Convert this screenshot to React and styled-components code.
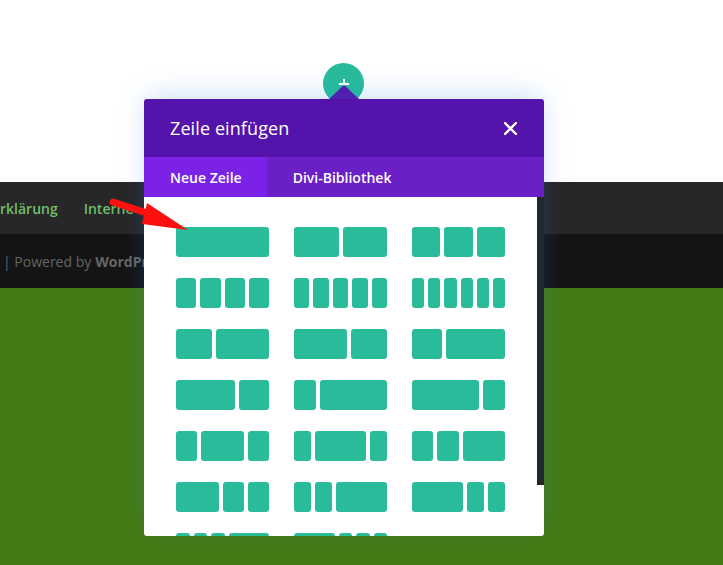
import React from 'react'
import styled, { createGlobalStyle } from 'styled-components'

const GlobalStyle = createGlobalStyle`
	html, body {
		margin: 0;
		padding: 0;
		background: #fff;
		font-family: "Open Sans", "Noto Sans", sans-serif;
		overflow: hidden;
	}
`

const Page = styled.div`
	position: relative;
	width: 723px;
	height: 565px;
	display: flex;
	flex-direction: column;
	overflow: hidden;
`

const TopArea = styled.div`
	height: 182px;
	background: #fff;
`

const NavBar = styled.div`
	height: 52px;
	background: #272727;
	display: flex;
	align-items: center;
	gap: 26px;
	font-size: 14px;
	font-weight: 600;
	color: #6fbf6b;
`

const FooterBar = styled.div`
	height: 54px;
	background: #141414;
	display: flex;
	align-items: center;
	padding-left: 3px;
	font-size: 14px;
	color: #666;

	b {
		font-weight: 700;
		margin-left: 4px;
	}
`

const GreenArea = styled.div`
	flex: 1;
	background: #447a13;
`

const AddButton = styled.div`
	position: absolute;
	left: 323px;
	top: 63px;
	width: 41px;
	height: 41px;
	border-radius: 50%;
	background: #29bb9a;
	display: flex;
	justify-content: center;
	padding-top: 16px;
	box-sizing: border-box;
	color: #fff;
`

const Pointer = styled.div`
	position: absolute;
	left: 329px;
	top: 85px;
	width: 0;
	height: 0;
	border-left: 15px solid transparent;
	border-right: 15px solid transparent;
	border-bottom: 14px solid #5413ab;
`

const Modal = styled.div`
	position: absolute;
	left: 144px;
	top: 99px;
	width: 400px;
	height: 437px;
	display: flex;
	flex-direction: column;
	border-radius: 3px;
	overflow: hidden;
	background: #fff;
	box-shadow: 0 -6px 26px -4px rgba(43, 135, 218, 0.28);
`

const Header = styled.div`
	height: 58px;
	flex: none;
	background: #5413ab;
	display: flex;
	align-items: center;
	justify-content: space-between;
	padding: 0 27px 0 26px;
	color: #fff;
`

const Title = styled.h1`
	margin: 0;
	font-size: 18px;
	font-weight: 500;
	letter-spacing: 0.1px;
`

const Tabs = styled.div`
	height: 40px;
	flex: none;
	display: flex;
	background: #6a1fc7;
`

const Tab = styled.div`
	display: flex;
	align-items: center;
	padding: 0 25px 0 26px;
	font-size: 14px;
	font-weight: 600;
	color: #fff;
	background: ${(props) => (props.active ? '#7b22e6' : 'transparent')};
`

const Content = styled.div`
	position: relative;
	flex: 1;
	overflow: hidden;
	padding: 30px 0 0 32px;
`

const ScrollTrack = styled.div`
	position: absolute;
	right: 0;
	top: 0;
	width: 7px;
	height: 288px;
	background: #23282d;
`

const LayoutGrid = styled.div`
	display: grid;
	grid-template-columns: repeat(3, 93px);
	column-gap: 25px;
	row-gap: 21px;
`

const Layout = styled.div`
	display: flex;
	gap: 4px;
	height: 30px;
`

const Column = styled.div`
	flex: ${(props) => props.grow} 1 0;
	background: #29bb9a;
	border-radius: 3px;
`

const Arrow = styled.svg`
	position: absolute;
	left: 100px;
	top: 190px;
	overflow: visible;
`

const layouts = [
	[[1], [1, 1], [1, 1, 1]],
	[[1, 1, 1, 1], [1, 1, 1, 1, 1], [1, 1, 1, 1, 1, 1]],
	[[2, 3], [3, 2], [1, 2]],
	[[2, 1], [1, 3], [3, 1]],
	[[1, 2, 1], [1, 3, 1], [1, 1, 2]],
	[[2, 1, 1], [1, 1, 3], [3, 1, 1]],
	[[1, 1, 1, 3], [3, 1, 1, 1]]
]

const App = () => (
	<>
		<GlobalStyle />
		<Page>
			<TopArea />
			<NavBar>
				<span>rklärung</span>
				<span>Interne</span>
			</NavBar>
			<FooterBar>
				| Powered by <b>WordPress</b>
			</FooterBar>
			<GreenArea />

			<AddButton>
				<svg width="10" height="10" viewBox="0 0 10 10">
					<path d="M5 0v10M0 5h10" stroke="#fff" strokeWidth="2" />
				</svg>
			</AddButton>
			<Pointer />

			<Modal>
				<Header>
					<Title>Zeile einfügen</Title>
					<svg width="13" height="13" viewBox="0 0 13 13">
						<path d="M1 1l11 11M12 1L1 12" stroke="#fff" strokeWidth="2.4" strokeLinecap="square" />
					</svg>
				</Header>
				<Tabs>
					<Tab active>Neue Zeile</Tab>
					<Tab>Divi-Bibliothek</Tab>
				</Tabs>
				<Content>
					<LayoutGrid>
						{layouts.flat().map((cols, i) => (
							<Layout key={i}>
								{cols.map((g, j) => (
									<Column key={j} grow={g} />
								))}
							</Layout>
						))}
					</LayoutGrid>
					<ScrollTrack />
				</Content>
			</Modal>

			<Arrow width="90" height="45" viewBox="0 0 90 45">
				<path d="M13 12L50 24" stroke="#ff1010" strokeWidth="7" strokeLinecap="round" />
				<polygon points="88,40 47,13 42,34" fill="#ff1010" />
			</Arrow>
		</Page>
	</>
)

export default App
